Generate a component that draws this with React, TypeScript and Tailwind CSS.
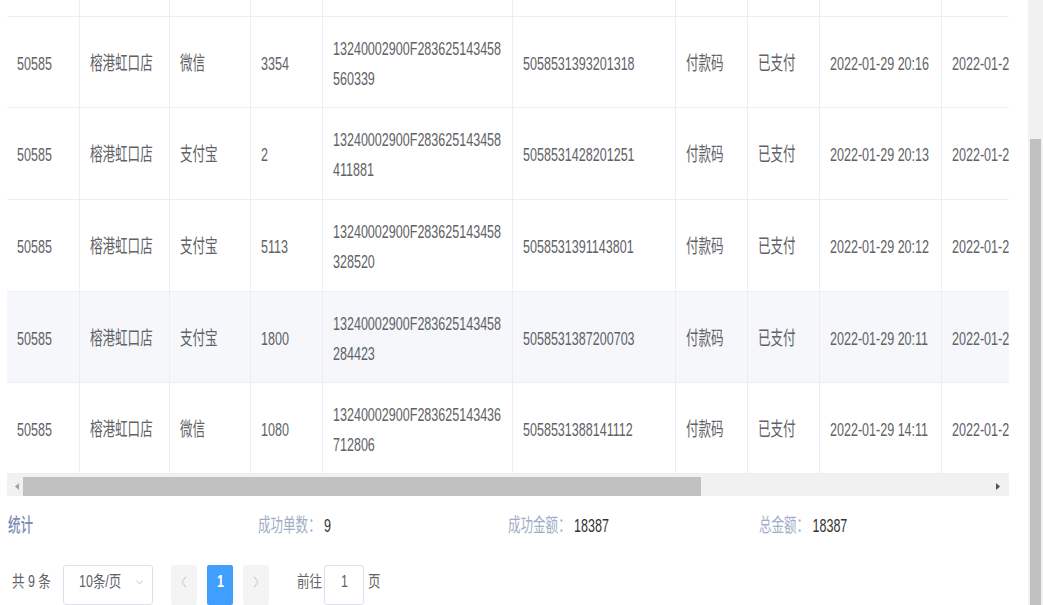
import React from "react";

const colW = [
  "w-[73px]",
  "w-[90px]",
  "w-[81px]",
  "w-[72px]",
  "w-[190px]",
  "w-[163px]",
  "w-[72px]",
  "w-[72px]",
  "w-[122px]",
  "w-[200px]",
];

type Row = {
  h: string;
  bg: string;
  pay: string;
  amt: string;
  o1: string;
  o2: string;
  no: string;
  t: string;
};

const rows: Row[] = [
  { h: "h-[91px]", bg: "bg-white", pay: "微信", amt: "3354", o1: "13240002900F283625143458", o2: "560339", no: "5058531393201318", t: "2022-01-29 20:16" },
  { h: "h-[92px]", bg: "bg-white", pay: "支付宝", amt: "2", o1: "13240002900F283625143458", o2: "411881", no: "5058531428201251", t: "2022-01-29 20:13" },
  { h: "h-[92px]", bg: "bg-white", pay: "支付宝", amt: "5113", o1: "13240002900F283625143458", o2: "328520", no: "5058531391143801", t: "2022-01-29 20:12" },
  { h: "h-[91px]", bg: "bg-[#f5f7fa]", pay: "支付宝", amt: "1800", o1: "13240002900F283625143458", o2: "284423", no: "5058531387200703", t: "2022-01-29 20:11" },
  { h: "h-[91px]", bg: "bg-white", pay: "微信", amt: "1080", o1: "13240002900F283625143436", o2: "712806", no: "5058531388141112", t: "2022-01-29 14:11" },
];

function S({ children, className = "" }: { children: React.ReactNode; className?: string }) {
  return (
    <span className={"block origin-left scale-x-[0.66] whitespace-nowrap " + className}>
      {children}
    </span>
  );
}

function P({ children, className = "" }: { children: React.ReactNode; className?: string }) {
  return (
    <span className={"block origin-left scale-x-[0.78] whitespace-nowrap " + className}>
      {children}
    </span>
  );
}

function Cell({ i, children }: { i: number; children?: React.ReactNode }) {
  const last = i === colW.length - 1;
  return (
    <div
      className={
        colW[i] +
        " shrink-0 h-full flex items-center pl-[10px] pt-[3px] " +
        (last ? "" : "border-r border-[#ebeef5]")
      }
    >
      {children}
    </div>
  );
}

function DataRow({ r }: { r: Row }) {
  const vals: React.ReactNode[] = [
    <S>50585</S>,
    <S>榕港虹口店</S>,
    <S>{r.pay}</S>,
    <S>{r.amt}</S>,
    <div className="flex flex-col">
      <S>{r.o1}</S>
      <S>{r.o2}</S>
    </div>,
    <S>{r.no}</S>,
    <S>付款码</S>,
    <S>已支付</S>,
    <S>{r.t}</S>,
    <S>{r.t}</S>,
  ];
  return (
    <div className={"flex border-b border-[#ebeef5] " + r.h + " " + r.bg}>
      {vals.map((v, i) => (
        <Cell key={i} i={i}>
          {v}
        </Cell>
      ))}
    </div>
  );
}

export default function App() {
  return (
    <div className="w-[1043px] h-[605px] overflow-hidden flex bg-white font-['Liberation_Sans','Noto_Sans_CJK_SC',sans-serif] text-[#606266]">
      <div className="w-[1028px] shrink-0 pl-[7px] flex flex-col">
        {/* table */}
        <div className="w-[1002px] overflow-hidden text-[19px] leading-[30px]">
          <div className="flex h-[17px] border-b border-[#ebeef5]">
            {colW.map((_, i) => (
              <Cell key={i} i={i} />
            ))}
          </div>
          {rows.map((r, i) => (
            <DataRow key={i} r={r} />
          ))}
          {/* horizontal scrollbar */}
          <div className="h-[25px] bg-[#f1f1f1] flex items-center">
            <div className="w-[16px] flex justify-center pl-[3px]">
              <svg width="4" height="7" viewBox="0 0 4 7">
                <polygon points="4,0 0,3.5 4,7" fill="#a3a3a3" />
              </svg>
            </div>
            <div className="w-[678px] h-[19px] bg-[#c1c1c1]" />
            <div className="flex-1" />
            <div className="w-[16px] flex justify-center pr-[6px]">
              <svg width="4" height="7" viewBox="0 0 4 7">
                <polygon points="0,0 4,3.5 0,7" fill="#505050" />
              </svg>
            </div>
          </div>
        </div>

        {/* stats */}
        <div className="h-[60px] pl-[1px] grid grid-cols-[250px_250px_251px_250px] items-center text-[19px] leading-[30px]">
          <S className="text-[#7d8db5] font-medium">统计</S>
          <S className="text-[#a1adc8]">
            成功单数：<span className="ml-[5px] text-[#333333]">9</span>
          </S>
          <S className="text-[#a1adc8]">
            成功金额：<span className="ml-[5px] text-[#333333]">18387</span>
          </S>
          <S className="text-[#a1adc8]">
            总金额：<span className="ml-[5px] text-[#333333]">18387</span>
          </S>
        </div>

        {/* pagination */}
        <div className="mt-[9px] pl-[5px] flex items-start text-[16px] leading-[20px]">
          <div className="w-[51px] h-[40px] pb-[6px] flex items-center">
            <P>共 9 条</P>
          </div>
          <div className="w-[90px] h-[40px] pb-[6px] border border-[#dcdfe6] rounded-[3px] flex items-center pl-[15px]">
            <P>10条/页</P>
            <div className="flex-1" />
            <svg width="7" height="5" viewBox="0 0 7 5" className="mr-[9px]">
              <polyline points="0.5,0.5 3.5,4 6.5,0.5" fill="none" stroke="#c0c4cc" strokeWidth="1" />
            </svg>
          </div>
          <div className="ml-[18px] w-[26px] h-[40px] pb-[6px] bg-[#f4f4f5] rounded-[2px] flex items-center justify-center">
            <svg width="6" height="12" viewBox="0 0 6 12">
              <polyline points="5,0.5 1,6 5,11.5" fill="none" stroke="#c0c4cc" strokeWidth="1" />
            </svg>
          </div>
          <div className="ml-[10px] w-[26px] h-[40px] pb-[6px] bg-[#409eff] rounded-[2px] flex items-center justify-center text-white font-bold">
            <span className="block scale-x-[0.78]">1</span>
          </div>
          <div className="ml-[10px] w-[26px] h-[40px] pb-[6px] bg-[#f4f4f5] rounded-[2px] flex items-center justify-center">
            <svg width="6" height="12" viewBox="0 0 6 12">
              <polyline points="1,0.5 5,6 1,11.5" fill="none" stroke="#c0c4cc" strokeWidth="1" />
            </svg>
          </div>
          <div className="ml-[28px] w-[27px] h-[40px] pb-[6px] flex items-center">
            <P>前往</P>
          </div>
          <div className="w-[40px] h-[40px] pb-[6px] border border-[#dcdfe6] rounded-[3px] flex items-center justify-center">
            <span className="block scale-x-[0.78]">1</span>
          </div>
          <div className="ml-[4px] h-[40px] pb-[6px] flex items-center">
            <P>页</P>
          </div>
        </div>
      </div>

      {/* vertical scrollbar */}
      <div className="w-[15px] shrink-0 h-full bg-[#f1f1f1] pt-[139px] px-[2px]">
        <div className="h-[500px] bg-[#c1c1c1]" />
      </div>
    </div>
  );
}
